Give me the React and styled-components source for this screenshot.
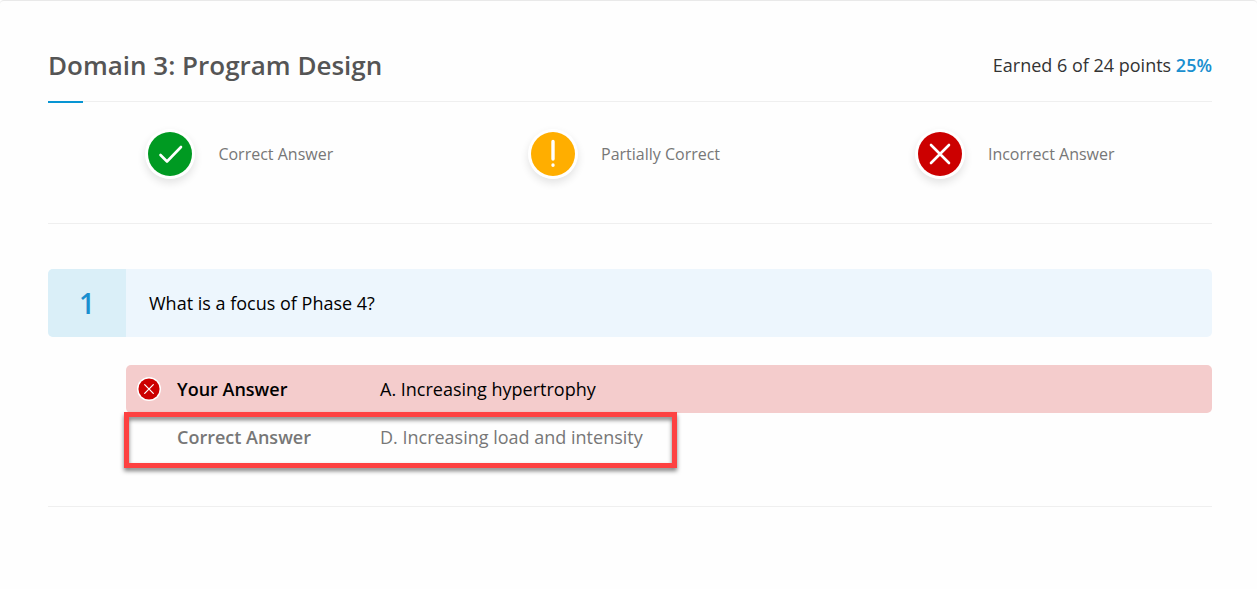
import styled, { createGlobalStyle } from 'styled-components'

const GlobalStyle = createGlobalStyle`
  * {
    box-sizing: border-box;
  }

  body {
    margin: 0;
    background-color: #fefefe;
    font-family: 'Open Sans', 'Noto Sans', sans-serif;
    font-size: 18px;
    font-weight: 400;
    color: #000;
  }
`

const icons = {
  correct: { color: '#009a22', path: 'M15.5 26 L22 32.5 L36 18' },
  partial: { color: '#ffae00', path: 'M25 12.5 V30 M25 36 V36.2' },
  incorrect: { color: '#cc0000', path: 'M16 16 L34 34 M34 16 L16 34' },
}

const legend = [
  { status: 'correct', label: 'Correct Answer' },
  { status: 'partial', label: 'Partially Correct' },
  { status: 'incorrect', label: 'Incorrect Answer' },
]

function StatusIcon({ status, className }) {
  const { color, path } = icons[status]

  return (
    <svg className={className} viewBox="0 0 50 50" aria-hidden="true">
      <circle cx="25" cy="25" r="25" fill="#fff" />
      <circle cx="25" cy="25" r="22" fill={color} />
      <path
        d={path}
        fill="none"
        stroke="#fff"
        strokeWidth={status === 'partial' ? 3.4 : 2.6}
        strokeLinecap="round"
        strokeLinejoin="round"
      />
    </svg>
  )
}

const LegendIcon = styled(StatusIcon)`
  width: 50px;
  height: 50px;
  border-radius: 50%;
  box-shadow: 0 4px 8px #0000001c;
`

const AnswerIcon = styled(StatusIcon)`
  display: block;
  width: 24px;
  height: 24px;
`

const Card = styled.main`
  border-top: 1px solid #e9e9e9;
  border-radius: 4px 4px 0 0;
  padding: 32px 45px 32px 48px;
`

const Header = styled.header`
  display: flex;
  align-items: center;
  justify-content: space-between;
  height: 69px;
  padding-bottom: 4px;
  border-bottom: 1px solid #efefef;
  position: relative;

  &::after {
    content: '';
    position: absolute;
    left: 0;
    bottom: -2px;
    width: 35px;
    height: 2px;
    background-color: #0795d3;
  }
`

const Title = styled.h1`
  margin: 0;
  font-size: 26px;
  font-weight: 600;
  line-height: 36px;
  color: #555;
`

const Score = styled.p`
  margin: 0;
  line-height: 24px;
  color: #333;

  strong {
    font-weight: 600;
    color: #1a8fcf;
  }
`

const Legend = styled.ul`
  display: flex;
  justify-content: space-around;
  margin: 0;
  padding: 27px 0 44px;
  border-bottom: 1px solid #efefef;
  list-style: none;
`

const LegendItem = styled.li`
  display: flex;
  align-items: center;
  gap: 23px;
  font-size: 16px;
  line-height: 24px;
  color: #777;
`

const Question = styled.section`
  padding: 45px 0;
  border-bottom: 1px solid #efefef;
`

const QuestionBar = styled.div`
  display: flex;
  min-height: 68px;
  border-radius: 5px;
  overflow: hidden;
  background-color: #edf6fd;
`

const QuestionNumber = styled.span`
  display: flex;
  align-items: center;
  justify-content: center;
  width: 78px;
  background-color: #daeff8;
  font-size: 28px;
  font-weight: 600;
  line-height: 36px;
  color: #1a8fcf;
`

const QuestionText = styled.h2`
  align-self: center;
  margin: 0;
  padding: 0 23px;
  font-size: 18px;
  font-weight: 400;
  line-height: 24px;
`

const Answers = styled.dl`
  margin: 28px 0 0 78px;
`

const AnswerRow = styled.div`
  display: grid;
  grid-template-columns: 24px 187px 1fr;
  column-gap: 16px;
  align-items: center;
  min-height: 48px;
  padding-left: 11px;
  border-radius: 5px;
  position: relative;
  line-height: 24px;
  color: ${({ $status }) => ($status ? '#000' : '#777')};
  background-color: ${({ $status }) => ($status ? '#f4cccc' : 'transparent')};

  dt {
    grid-column: 2;
    font-weight: 600;
  }

  dd {
    margin: 0;
  }
`

const Highlight = styled.span`
  position: absolute;
  top: -1px;
  left: -2px;
  width: 553px;
  height: 56px;
  border: 5px solid #fd4141;
  filter: drop-shadow(0 3px 2px #00000080);
  pointer-events: none;
`

function Answer({ label, text, status, highlighted }) {
  return (
    <AnswerRow $status={status}>
      {status && <AnswerIcon status={status} />}
      <dt>{label}</dt>
      <dd>
        {text}
        {highlighted && <Highlight />}
      </dd>
    </AnswerRow>
  )
}

export default function App() {
  return (
    <>
      <GlobalStyle />
      <Card>
        <Header>
          <Title>Domain 3: Program Design</Title>
          <Score>
            Earned 6 of 24 points <strong>25%</strong>
          </Score>
        </Header>
        <Legend>
          {legend.map(({ status, label }) => (
            <LegendItem key={status}>
              <LegendIcon status={status} />
              {label}
            </LegendItem>
          ))}
        </Legend>
        <Question>
          <QuestionBar>
            <QuestionNumber>1</QuestionNumber>
            <QuestionText>What is a focus of Phase 4?</QuestionText>
          </QuestionBar>
          <Answers>
            <Answer
              label="Your Answer"
              text="A. Increasing hypertrophy"
              status="incorrect"
            />
            <Answer
              label="Correct Answer"
              text="D. Increasing load and intensity"
              highlighted
            />
          </Answers>
        </Question>
      </Card>
    </>
  )
}
